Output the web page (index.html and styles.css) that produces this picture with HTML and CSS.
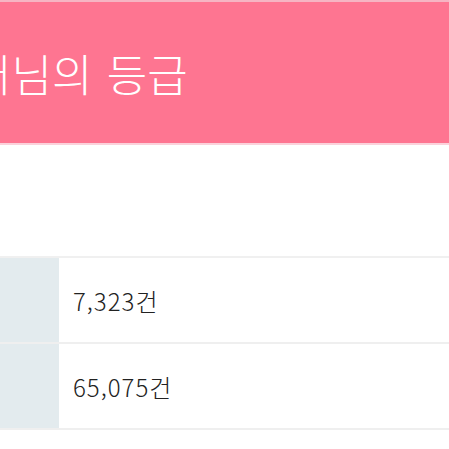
FILE: index.html
```html
<!DOCTYPE html>
<html lang="ko">
<head>
<meta charset="utf-8">
<link rel="stylesheet" href="styles.css">
</head>
<body>
<div class="page">
  <header class="grade-head">
    <h1 class="grade-title">테스터님의 등급</h1>
  </header>
  <div class="spacer"></div>
  <div class="stats">
    <div class="row">
      <div class="label"></div>
      <div class="value">7,323건</div>
    </div>
    <div class="row">
      <div class="label"></div>
      <div class="value">65,075건</div>
    </div>
  </div>
</div>
</body>
</html>
```
FILE: styles.css
```css
html, body {
  margin: 0;
  padding: 0;
  background: #ffffff;
}
.page {
  width: 449px;
  height: 449px;
  overflow: hidden;
  font-family: "Noto Sans CJK KR", "Noto Sans", sans-serif;
}
.grade-head {
  height: 141px;
  background: #fe7591;
  border-top: 2px solid #f6b5c3;
  border-bottom: 2px solid #fbd2db;
  display: flex;
  align-items: center;
  overflow: hidden;
}
.grade-title {
  margin: 0 0 0 -110px;
  font-size: 44px;
  font-weight: 300;
  color: #ffffff;
  white-space: nowrap;
  line-height: 1;
  word-spacing: 2px;
}
.spacer {
  height: 111px;
}
.stats {
  border-top: 2px solid #f0f0f0;
}
.row {
  display: flex;
  height: 84px;
  border-bottom: 2px solid #efefef;
}
.label {
  width: 59px;
  background: #e3ebee;
}
.value {
  flex: 1;
  display: flex;
  align-items: center;
  padding-left: 14px;
  font-family: "Noto Sans CJK KR", sans-serif;
  font-size: 24px;
  font-weight: 300;
  letter-spacing: 1px;
  color: #222222;
}
```
